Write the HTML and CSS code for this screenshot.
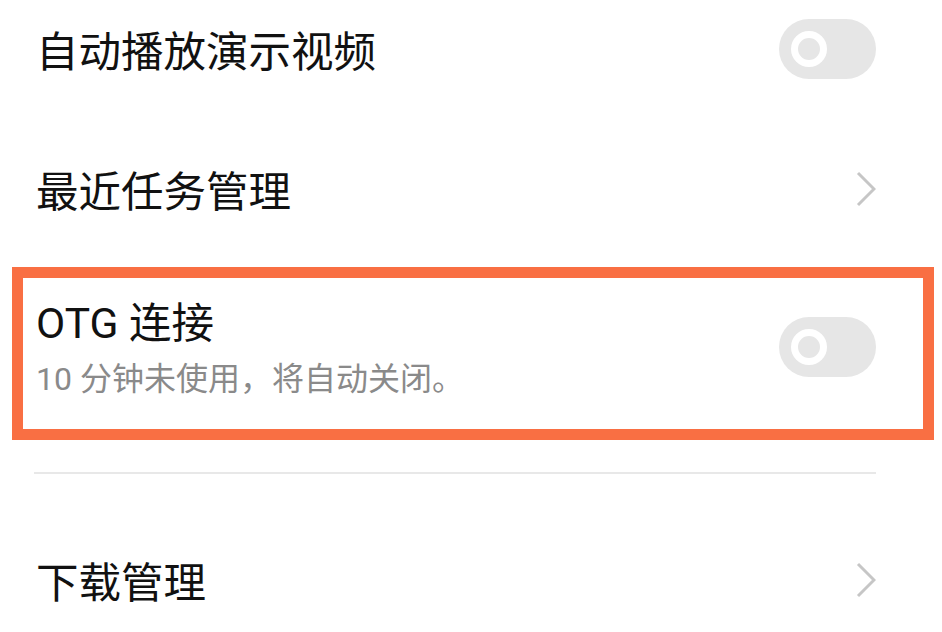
FILE: index.html
```html
<!DOCTYPE html>
<html lang="zh-CN">
<head>
<meta charset="utf-8">
<link rel="stylesheet" href="styles.css">
</head>
<body>
<div class="list">
  <div class="row">
    <span class="title">自动播放演示视频</span>
    <span class="switch"><span class="knob"></span></span>
  </div>
  <div class="row">
    <span class="title">最近任务管理</span>
    <svg class="chevron" width="20" height="36" viewBox="0 0 20 36"><polyline points="2,2 18,18 2,34" fill="none" stroke="#c6c6c6" stroke-width="3"/></svg>
  </div>
  <div class="highlight">
    <div class="item">
      <div class="texts">
        <div class="title">OTG 连接</div>
        <div class="sub">10 分钟未使用，将自动关闭。</div>
      </div>
      <span class="switch"><span class="knob"></span></span>
    </div>
  </div>
  <div class="divider"></div>
  <div class="row last">
    <span class="title">下载管理</span>
    <svg class="chevron" width="20" height="36" viewBox="0 0 20 36"><polyline points="2,2 18,18 2,34" fill="none" stroke="#c6c6c6" stroke-width="3"/></svg>
  </div>
</div>
</body>
</html>
```
FILE: styles.css
```css
html, body {
  margin: 0;
  padding: 0;
  background: #ffffff;
  overflow: hidden;
}
body {
  width: 942px;
  height: 632px;
  font-family: Roboto, "Noto Sans CJK SC", sans-serif;
  color: #111111;
}
.list {
  display: flex;
  flex-direction: column;
  margin-top: -21px;
}
.row {
  height: 140px;
  display: flex;
  align-items: center;
  justify-content: space-between;
  padding: 0 66px 0 36px;
}
.title {
  font-size: 42.5px;
  line-height: 50px;
  font-weight: 400;
  white-space: nowrap;
}
.row .title {
  padding-top: 7px;
}
.switch {
  position: relative;
  width: 97px;
  height: 60px;
  border-radius: 30px;
  background: #e6e6e6;
  flex: none;
}
.knob {
  position: absolute;
  left: 12px;
  top: 12px;
  width: 22px;
  height: 22px;
  border-radius: 50%;
  border: 7px solid #ffffff;
  background: #e6e6e6;
}
.chevron {
  flex: none;
}
.highlight {
  margin: 8px 8px 0 12px;
  border: 11px solid #f96f43;
  height: 151px;
}
.item {
  display: flex;
  align-items: flex-start;
  justify-content: space-between;
  height: 100%;
  padding: 0 47px 0 13px;
}
.texts {
  display: flex;
  flex-direction: column;
  gap: 10px;
  margin-top: 21px;
}
.item .switch {
  margin-top: 39px;
}
.sub {
  font-size: 32px;
  line-height: 40px;
  font-weight: 400;
  color: #8a8a8a;
  white-space: nowrap;
}
.divider {
  margin: 32px 66px 0 34px;
  height: 2px;
  background: #e8e8e8;
}
.row.last {
  margin-top: 36px;
}
```
